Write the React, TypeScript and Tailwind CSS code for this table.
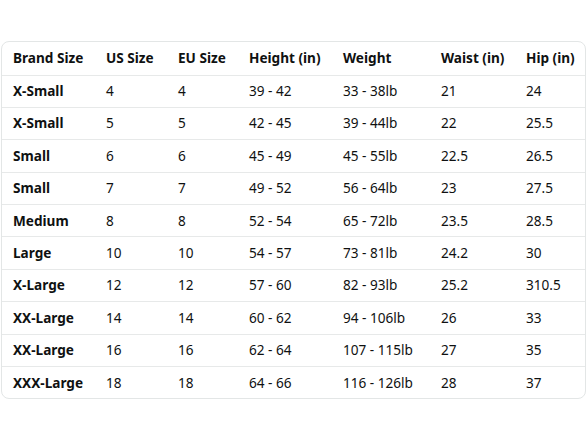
const rows: string[][] = [
  ["X-Small", "4", "4", "39 - 42", "33 - 38lb", "21", "24"],
  ["X-Small", "5", "5", "42 - 45", "39 - 44lb", "22", "25.5"],
  ["Small", "6", "6", "45 - 49", "45 - 55lb", "22.5", "26.5"],
  ["Small", "7", "7", "49 - 52", "56 - 64lb", "23", "27.5"],
  ["Medium", "8", "8", "52 - 54", "65 - 72lb", "23.5", "28.5"],
  ["Large", "10", "10", "54 - 57", "73 - 81lb", "24.2", "30"],
  ["X-Large", "12", "12", "57 - 60", "82 - 93lb", "25.2", "310.5"],
  ["XX-Large", "14", "14", "60 - 62", "94 - 106lb", "26", "33"],
  ["XX-Large", "16", "16", "62 - 64", "107 - 115lb", "27", "35"],
  ["XXX-Large", "18", "18", "64 - 66", "116 - 126lb", "28", "37"],
];

const headers = ["Brand Size", "US Size", "EU Size", "Height (in)", "Weight", "Waist (in)", "Hip (in)"];

const grid = "grid grid-cols-[93px_72px_71px_94px_98px_85px_1fr] items-center";

export default function App() {
  return (
    <div className="w-[588px] h-[441px] bg-white pt-[41px] pl-[1px] font-['Noto_Sans',sans-serif] text-[13.6px] text-[#0f1111]">
      <div className="w-[585px] rounded-lg border border-[#e3e6e6] overflow-hidden">
        <div className={`${grid} h-[32.5px] font-bold`}>
          {headers.map((h) => (
            <div key={h} className="pl-[11px] whitespace-nowrap">{h}</div>
          ))}
        </div>
        {rows.map((r, i) => (
          <div key={i} className={`${grid} h-[32.4px] border-t border-[#e7e9e9]`}>
            {r.map((c, j) => (
              <div key={j} className={`pl-[11px] whitespace-nowrap ${j === 0 ? "font-bold" : ""}`}>{c}</div>
            ))}
          </div>
        ))}
      </div>
    </div>
  );
}
